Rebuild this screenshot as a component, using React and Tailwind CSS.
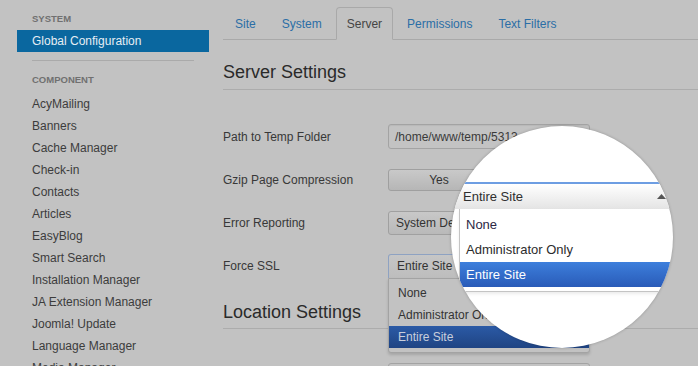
import React from "react";

const items = [
  "AcyMailing",
  "Banners",
  "Cache Manager",
  "Check-in",
  "Contacts",
  "Articles",
  "EasyBlog",
  "Smart Search",
  "Installation Manager",
  "JA Extension Manager",
  "Joomla! Update",
  "Language Manager",
  "Media Manager",
];

const tabs = ["Site", "System", "Server", "Permissions", "Text Filters"];

function Row({ label, children }) {
  return (
    <div className="flex h-[43px] items-center">
      <div className="w-[165px] shrink-0 text-[12px] text-[#383838]">{label}</div>
      <div className="relative">{children}</div>
    </div>
  );
}

export default function App() {
  return (
    <div className="relative flex h-[366px] w-[698px] overflow-hidden bg-[#c2c2c2] font-['Liberation_Sans',Arial,sans-serif]">
      {/* Sidebar */}
      <div className="w-[223px] shrink-0 pl-[17px] pr-[14px] pt-[13px]">
        <div className="pl-[15px] text-[9.5px] font-bold uppercase leading-[12px] text-[#707070]">
          System
        </div>
        <div className="mt-[5px] h-[22px] bg-[#0a679f] pl-[15px] text-[12px] leading-[22px] text-[#e6eef4]">
          Global Configuration
        </div>
        <div className="mx-[15px] mt-[8px] h-px bg-[#aaaaaa]" />
        <div className="mt-[13px] pl-[15px] text-[9.5px] font-bold uppercase leading-[12px] text-[#707070]">
          Component
        </div>
        <div className="mt-[7px]">
          {items.map((it) => (
            <div key={it} className="h-[22px] pl-[15px] text-[12px] leading-[22px] text-[#3c3c3c]">
              {it}
            </div>
          ))}
        </div>
      </div>

      {/* Main */}
      <div className="flex-1 pt-[8px]">
        <div className="flex h-[32px] items-end border-b border-[#a9a9a9]">
          {tabs.map((t) => {
            const active = t === "Server";
            return (
              <div
                key={t}
                className={
                  active
                    ? "-mb-px mr-[2px] flex h-[33px] items-center rounded-t-[4px] border border-[#a9a9a9] border-b-[#c2c2c2] bg-[#c2c2c2] px-[10px] text-[12px] text-[#454545]"
                    : "-mb-px mr-[2px] flex h-[33px] items-center border border-transparent px-[11px] text-[12px] text-[#2b6ea6]"
                }
              >
                {t}
              </div>
            );
          })}
        </div>

        <div className="mt-[21px] border-b border-[#acacac] pb-[6px] text-[18px] leading-[22px] text-[#2a2a2a]">
          Server Settings
        </div>

        <div className="mt-[25px]">
          <Row label="Path to Temp Folder">
            <div className="flex h-[25px] w-[202px] items-center rounded-[3px] border border-[#a3a3a3] bg-[#c3c3c3] pl-[6px] text-[12px] text-[#3a3a3a] shadow-[inset_0_1px_1px_rgba(0,0,0,0.06)]">
              /home/www/temp/5313
            </div>
          </Row>
          <Row label="Gzip Page Compression">
            <div className="flex h-[22px] w-[202px]">
              <div className="flex h-full w-[102px] items-center justify-center rounded-l-[3px] border border-[#9f9f9f] bg-gradient-to-b from-[#c9c9c9] to-[#b6b6b6] text-[12px] text-[#333333]">
                Yes
              </div>
              <div className="flex h-full flex-1 items-center justify-center rounded-r-[3px] border border-l-0 border-[#9f9f9f] bg-gradient-to-b from-[#c9c9c9] to-[#b6b6b6] text-[12px] text-[#333333]">
                No
              </div>
            </div>
          </Row>
          <Row label="Error Reporting">
            <div className="flex h-[24px] w-[202px] items-center rounded-[3px] border border-[#a0a0a0] bg-gradient-to-b from-[#c8c8c8] to-[#b9b9b9] pl-[7px] text-[12px] text-[#333333]">
              System Default
            </div>
          </Row>
          <Row label="Force SSL">
            <div className="flex h-[24px] w-[202px] items-center rounded-t-[3px] border border-b-0 border-[#8ea2c2] bg-gradient-to-b from-[#c6c6c6] to-[#bdbdbd] pl-[8px] text-[12px] text-[#333333]">
              Entire Site
            </div>
            <div className="absolute left-0 top-full z-10 w-[202px] rounded-b-[3px] border border-[#a3a3a3] bg-[#c2c2c2] pb-[4px] pt-[3px] shadow-[0_2px_3px_rgba(0,0,0,0.15)]">
              <div className="h-[22px] pl-[9px] text-[12px] leading-[22px] text-[#333333]">None</div>
              <div className="h-[22px] pl-[9px] text-[12px] leading-[22px] text-[#333333]">Administrator Only</div>
              <div className="h-[22px] bg-gradient-to-b from-[#2b5aa6] to-[#1f4483] pl-[9px] text-[12px] leading-[22px] text-[#c9cfdc]">
                Entire Site
              </div>
            </div>
          </Row>
        </div>

        <div className="mt-[14px] border-b border-[#acacac] pb-[5px] text-[18px] leading-[22px] text-[#2a2a2a]">
          Location Settings
        </div>
        <div className="mt-[34px] pl-[165px]">
          <div className="h-[25px] w-[202px] rounded-[3px] border border-[#a3a3a3] bg-[#c3c3c3]" />
        </div>
      </div>

      {/* Magnifier */}
      <div className="absolute left-[451px] top-[126px] z-20 h-[222px] w-[222px] overflow-hidden rounded-full bg-white shadow-[0_0_3px_rgba(0,0,0,0.25)]">
        <div className="mt-[56px] flex h-[27px] items-center justify-between border-t-2 border-[#6d9de2] bg-gradient-to-b from-white to-[#e4e4e4] pl-[12px] pr-[8px] text-[13px] text-[#2f2f2f]">
          <span>Entire Site</span>
          <svg width="9" height="5" viewBox="0 0 9 5" className="mr-[-1px]">
            <polygon points="0,5 4.5,0 9,5" fill="#555555" />
          </svg>
        </div>
        <div className="ml-[8px] border-b border-l border-[#c4c4c4] pb-[4px] pt-[3px] shadow-[0_2px_3px_rgba(0,0,0,0.08)]">
          <div className="h-[25px] pl-[6px] text-[13px] leading-[25px] text-[#2c2845]">None</div>
          <div className="h-[25px] pl-[6px] text-[13px] leading-[25px] text-[#2c2c2c]">Administrator Only</div>
          <div className="h-[25px] bg-gradient-to-b from-[#3d7fdc] to-[#2a5bb8] pl-[6px] text-[13px] leading-[25px] text-white">
            Entire Site
          </div>
        </div>
      </div>
    </div>
  );
}
